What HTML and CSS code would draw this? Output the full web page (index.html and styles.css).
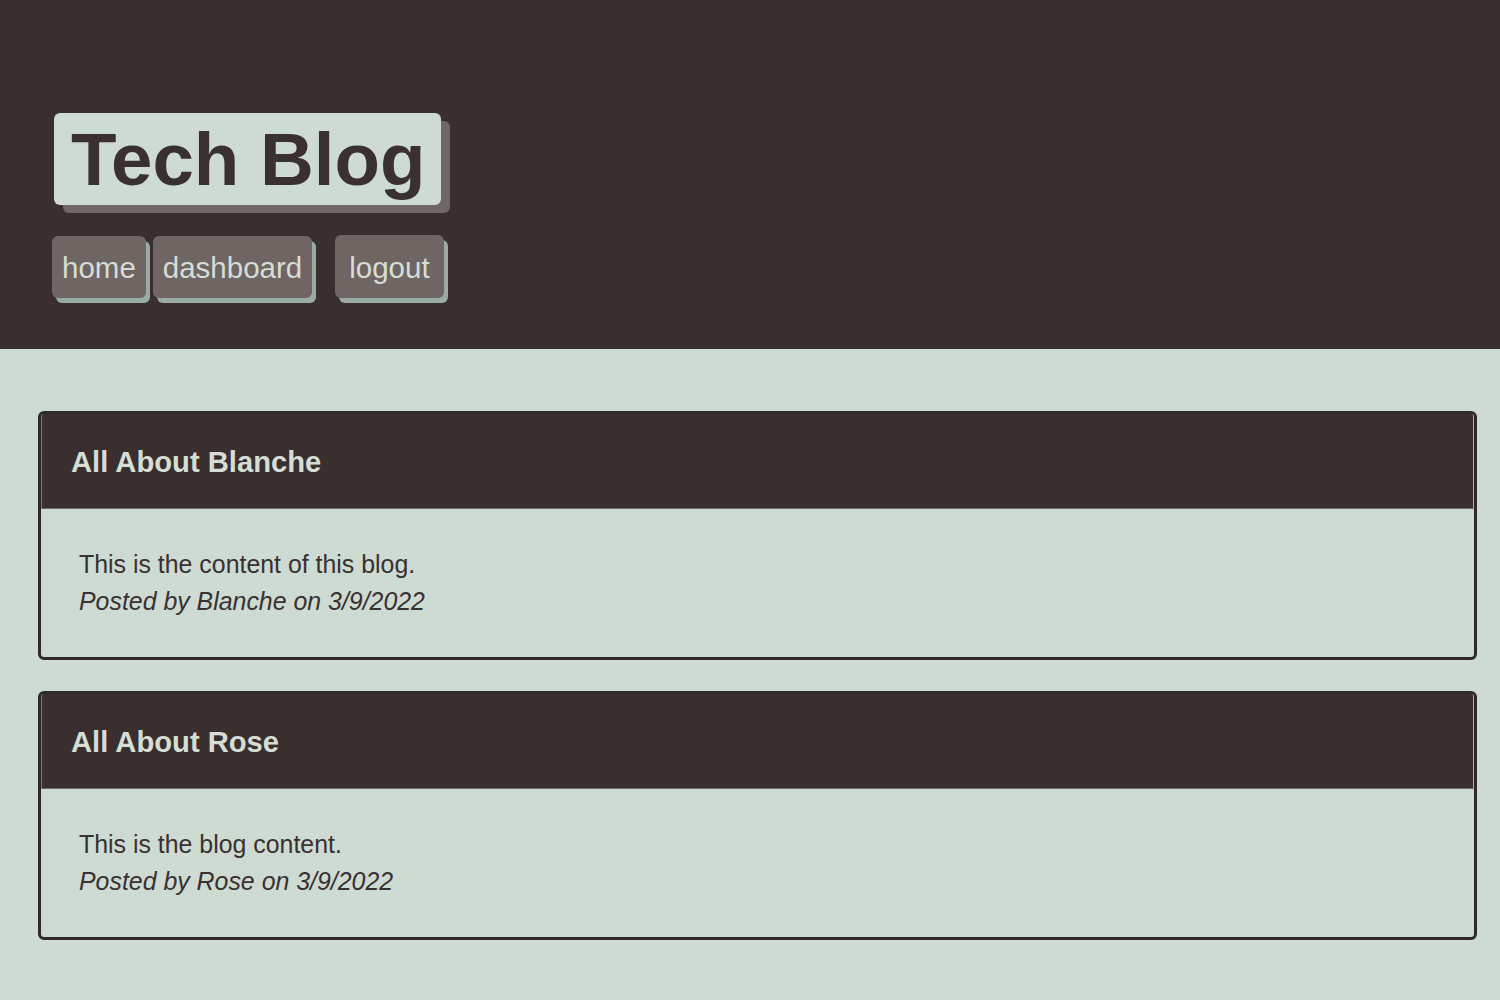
FILE: index.html
```html
<!DOCTYPE html>
<html lang="en">
<head>
<meta charset="utf-8">
<title>Tech Blog</title>
<link rel="stylesheet" href="styles.css">
</head>
<body>
<header class="site-header">
  <h1 class="brand">Tech Blog</h1>
  <nav class="nav">
    <a class="nav-btn" href="#">home</a>
    <a class="nav-btn" href="#">dashboard</a>
    <a class="nav-btn nav-logout" href="#">logout</a>
  </nav>
</header>
<main class="posts">
  <article class="card">
    <h2 class="card-header">All About Blanche</h2>
    <div class="card-body">
      <p class="content">This is the content of this blog.</p>
      <p class="meta">Posted by Blanche on 3/9/2022</p>
    </div>
  </article>
  <article class="card">
    <h2 class="card-header">All About Rose</h2>
    <div class="card-body">
      <p class="content">This is the blog content.</p>
      <p class="meta">Posted by Rose on 3/9/2022</p>
    </div>
  </article>
</main>
</body>
</html>
```
FILE: styles.css
```css
* { box-sizing: border-box; }
html, body {
  margin: 0;
  padding: 0;
  background: #cddbd3;
  font-family: "Liberation Sans", Arial, sans-serif;
  color: #3a3030;
}
.site-header {
  background: #3a2f2f;
  height: 349px;
  padding: 113px 0 0 54px;
}
.brand {
  display: inline-block;
  margin: 0;
  background: #cddbd3;
  color: #3a3030;
  font-size: 74.5px;
  font-weight: 700;
  line-height: 94px;
  height: 92px;
  padding: 0 15px 0 17px;
  border-radius: 6px;
  box-shadow: 9px 8px 0 #706664;
}
.nav {
  display: flex;
  align-items: flex-start;
  margin-top: 31px;
  margin-left: -2px;
}
.nav-btn {
  display: block;
  background: #6f6563;
  color: #d6ddd5;
  text-decoration: none;
  font-size: 29.5px;
  line-height: 64px;
  height: 62px;
  padding: 0 10px;
  border-radius: 6px;
  box-shadow: 4px 5px 0 #9aaba3;
  margin-right: 7px;
}
.nav-logout {
  margin-left: 16px;
  padding: 0 14px;
  height: 63px;
  margin-top: -1px;
  line-height: 66px;
}
.posts {
  padding: 62px 23px 40px 38px;
  display: flex;
  flex-direction: column;
  gap: 31px;
}
.card {
  border: 3px solid #302929;
  border-radius: 6px;
  overflow: hidden;
}
.card-header {
  margin: 0;
  background: #3a2f2f;
  color: #d6ddd5;
  font-size: 29.2px;
  font-weight: 700;
  height: 95px;
  line-height: 96px;
  padding-left: 29px;
  border-left: 1px solid #7d7775;
  border-right: 1px solid #aab5ae;
  border-bottom: 1px solid #6f6a66;
}
.card-body {
  padding: 37px 38px 37px;
}
.card-body p {
  margin: 0;
  font-size: 24.9px;
  line-height: 37px;
  color: #3a3030;
}
.meta {
  font-style: italic;
}
```
